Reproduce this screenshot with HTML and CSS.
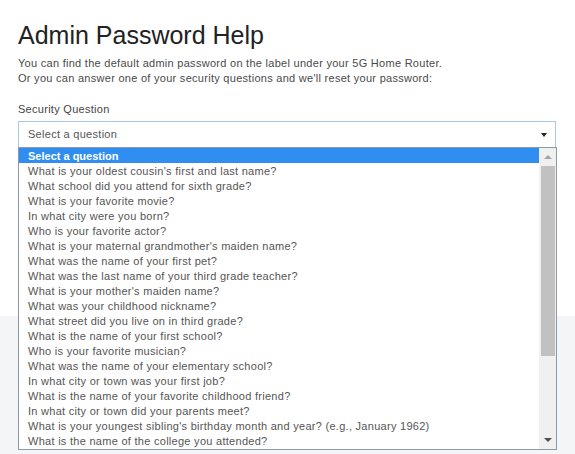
FILE: index.html
```html
<!DOCTYPE html>
<html>
<head>
    <meta charset="utf-8">
    <title>Admin Password Help</title>
    <link rel="stylesheet" href="styles.css">
</head>
<body>
<div class="main">
    <h1>Admin Password Help</h1>
    <p class="intro">You can find the default admin password on the label under your 5G Home Router.<br>
        Or you can answer one of your security questions and we'll reset your password:</p>
    <div class="label">Security Question</div>
    <div class="picker">
        <div class="select">
            <span>Select a question</span>
            <span class="caret"></span>
        </div>
        <div class="dropdown">
            <ul class="options">
                <li class="selected">Select a question</li>
                <li>What is your oldest cousin's first and last name?</li>
                <li>What school did you attend for sixth grade?</li>
                <li>What is your favorite movie?</li>
                <li>In what city were you born?</li>
                <li>Who is your favorite actor?</li>
                <li>What is your maternal grandmother's maiden name?</li>
                <li>What was the name of your first pet?</li>
                <li>What was the last name of your third grade teacher?</li>
                <li>What is your mother's maiden name?</li>
                <li>What was your childhood nickname?</li>
                <li>What street did you live on in third grade?</li>
                <li>What is the name of your first school?</li>
                <li>Who is your favorite musician?</li>
                <li>What was the name of your elementary school?</li>
                <li>In what city or town was your first job?</li>
                <li>What is the name of your favorite childhood friend?</li>
                <li>In what city or town did your parents meet?</li>
                <li>What is your youngest sibling's birthday month and year? (e.g., January 1962)</li>
                <li>What is the name of the college you attended?</li>
            </ul>
            <div class="scrollbar">
                <span class="arrow up"></span>
                <div class="track"><div class="thumb"></div></div>
                <span class="arrow down"></span>
            </div>
        </div>
    </div>
</div>
<div class="lower"></div>
</body>
</html>
```

FILE: styles.css
```css
* {margin:0; padding:0; box-sizing:border-box}
html, body {height:100%}
body {font:11px "Liberation Sans", Arial, Helvetica, sans-serif; letter-spacing:0.28px; color:#555; background:#f4f5f7; display:flex; flex-direction:column}

.main {height:316px; padding:20px 18px 0; background:#fff}
h1 {font-size:25px; line-height:30px; font-weight:normal; color:#222; letter-spacing:0}
.intro {margin-top:6px; line-height:15px; color:#4a4a4a}
.label {margin-top:16px; line-height:15px; color:#444}

.picker {position:relative; margin-top:4px; width:538px}
.select {height:27px; border:1px solid #a9c9ea; display:flex; align-items:center; justify-content:space-between; padding:0 8px 0 9px; line-height:25px; color:#555; background:#fff}
.caret {width:0; height:0; border-left:3.5px solid transparent; border-right:3.5px solid transparent; border-top:4px solid #222}

.dropdown {position:absolute; top:26px; left:0; width:539px; height:303px; border:1px solid #8c99ad; background:#fff; display:flex; z-index:10}
.options {flex:1; list-style:none; overflow:hidden}
.options li {height:15px; line-height:16px; padding-left:9px; white-space:nowrap; color:#555}
.options li.selected {background:#2f8ef0; color:#fff; font-weight:bold; letter-spacing:0}

.scrollbar {width:17px; background:#f0f0f0; display:flex; flex-direction:column; align-items:center}
.arrow {width:0; height:0; border-left:4px solid transparent; border-right:4px solid transparent}
.arrow.up {margin:7px 0 6px; border-bottom:4px solid #a3a3a3}
.arrow.down {margin:6px 0 7px; border-top:4px solid #505050}
.track {flex:1; width:100%; padding:1px 1px 0 2px}
.thumb {height:190px; background:#c1c1c1}

.lower {flex:1}
```
